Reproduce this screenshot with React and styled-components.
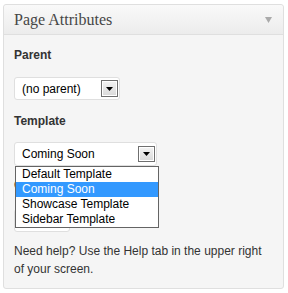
import React from "react";
import styled, { createGlobalStyle } from "styled-components";

const Global = createGlobalStyle`
  html, body { margin: 0; padding: 0; background: #ffffff; }
  body { font-family: "Liberation Sans", Arial, sans-serif; }
`;

const Page = styled.div`
  padding: 4px 4px 0 3px;
`;

const Panel = styled.div`
  position: relative;
  width: 281px;
  box-sizing: border-box;
  border: 1px solid #dfdfdf;
  border-radius: 3px;
  background: #f5f5f5;
`;

const Header = styled.div`
  height: 29px;
  border-bottom: 1px solid #dfdfdf;
  background: linear-gradient(to bottom, #f9f9f9, #ececec);
  border-radius: 3px 3px 0 0;
  display: flex;
  align-items: center;
  justify-content: space-between;
  padding: 0 11px 0 10px;
`;

const Title = styled.h3`
  margin: 0;
  font-family: "Liberation Serif", Georgia, serif;
  font-weight: normal;
  font-size: 16px;
  color: #464646;
  padding-top: 1px;
`;

const Body = styled.div`
  position: relative;
  display: flow-root;
  padding: 0 10px 10px 10px;
`;

const Label = styled.p`
  margin: ${(p) => p.$top}px 0 0 0;
  font-weight: bold;
  font-size: 12px;
  line-height: 15px;
  color: #333333;
`;

const SelectBox = styled.div`
  margin-top: ${(p) => p.$top}px;
  width: ${(p) => p.$width}px;
  height: ${(p) => p.$height}px;
  box-sizing: border-box;
  border: 1px solid #dfdfdf;
  border-radius: 3px;
  background: #ffffff;
  display: flex;
  align-items: center;
  justify-content: space-between;
  padding: 0 1px 0 7px;
  font-size: 12px;
  color: #000000;
`;

const DropButton = styled.div`
  width: 17px;
  height: ${(p) => p.$height}px;
  box-sizing: border-box;
  border: 1px solid #6f6f6f;
  box-shadow: inset 0 0 0 1px #ffffff;
  background: linear-gradient(to bottom, #f3f3f3, #d9d9d9);
  display: flex;
  align-items: center;
  justify-content: center;
`;

const Input = styled.div`
  margin-top: ${(p) => p.$top}px;
  width: 56px;
  height: 23px;
  box-sizing: border-box;
  border: 1px solid #dfdfdf;
  border-radius: 3px;
  background: #ffffff;
`;

const Help = styled.p`
  margin: 10px 0 0 0;
  font-size: 12px;
  line-height: 18px;
  color: #333333;
`;

const DropList = styled.ul`
  position: absolute;
  left: 11px;
  top: 131px;
  width: 144px;
  box-sizing: border-box;
  margin: 0;
  padding: 0;
  list-style: none;
  border: 1px solid #646464;
  background: #ffffff;
`;

const Option = styled.li`
  height: 15px;
  line-height: 15px;
  padding-left: 6px;
  font-size: 12px;
  color: ${(p) => (p.$active ? "#ffffff" : "#000000")};
  background: ${(p) => (p.$active ? "#3399ff" : "#ffffff")};
  white-space: nowrap;
`;

const Arrow = ({ color = "#000", w = 7, h = 4 }) => (
  <svg width={w} height={h} viewBox={`0 0 ${w} ${h}`}>
    <polygon points={`0,0 ${w},0 ${w / 2},${h}`} fill={color} />
  </svg>
);

export default function App() {
  const options = [
    "Default Template",
    "Coming Soon",
    "Showcase Template",
    "Sidebar Template",
  ];
  return (
    <>
      <Global />
      <Page>
        <Panel>
          <Header>
            <Title>Page Attributes</Title>
            <Arrow color="#aaaaaa" w={7} h={6} />
          </Header>
          <Body>
            <Label $top={13}>Parent</Label>
            <SelectBox $top={14} $width={106} $height={23}>
              <span>(no parent)</span>
              <DropButton $height={17}>
                <Arrow />
              </DropButton>
            </SelectBox>
            <Label $top={14}>Template</Label>
            <SelectBox $top={13} $width={143} $height={24}>
              <span>Coming Soon</span>
              <DropButton $height={16}>
                <Arrow />
              </DropButton>
            </SelectBox>
            <Label $top={12}>Order</Label>
            <Input $top={16} />
            <Help>
              Need help? Use the Help tab in the upper right of your screen.
            </Help>
            <DropList>
              {options.map((o) => (
                <Option key={o} $active={o === "Coming Soon"}>
                  {o}
                </Option>
              ))}
            </DropList>
          </Body>
        </Panel>
      </Page>
    </>
  );
}
